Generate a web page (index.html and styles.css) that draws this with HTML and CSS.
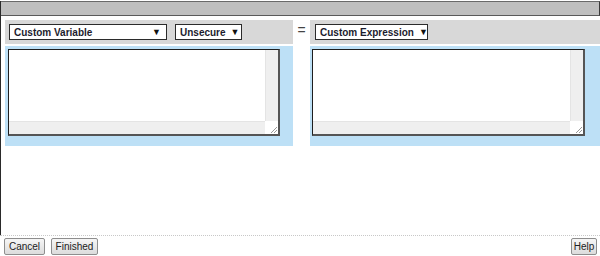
FILE: index.html
```html
<!DOCTYPE html>
<html lang="en">
<head>
    <meta charset="UTF-8">
    <title>Condition Editor</title>
    <link rel="stylesheet" href="styles.css">
</head>
<body>
    <div class="window">
        <div class="titlebar"></div>
        <div class="content">
            <div class="side left">
                <div class="toolbar">
                    <span class="select variable">Custom Variable <span class="arrow">&#9660;</span></span>
                    <span class="select security">Unsecure <span class="arrow">&#9660;</span></span>
                </div>
                <div class="area">
                    <div class="editor">
                        <div class="text"></div>
                        <div class="vscroll"></div>
                        <div class="hscroll"></div>
                        <div class="corner">
                            <svg width="10" height="10" viewBox="0 0 10 10">
                                <path d="M9 3 L3 9 M9 6 L6 9" stroke="#999" stroke-width="1" fill="none"/>
                            </svg>
                        </div>
                    </div>
                </div>
            </div>
            <div class="equals">=</div>
            <div class="side right">
                <div class="toolbar">
                    <span class="select expression">Custom Expression <span class="arrow">&#9660;</span></span>
                </div>
                <div class="area">
                    <div class="editor">
                        <div class="text"></div>
                        <div class="vscroll"></div>
                        <div class="hscroll"></div>
                        <div class="corner">
                            <svg width="10" height="10" viewBox="0 0 10 10">
                                <path d="M9 3 L3 9 M9 6 L6 9" stroke="#999" stroke-width="1" fill="none"/>
                            </svg>
                        </div>
                    </div>
                </div>
            </div>
        </div>
    </div>
    <div class="footer">
        <button class="btn cancel">Cancel</button>
        <button class="btn finished">Finished</button>
        <span class="spacer"></span>
        <button class="btn help">Help</button>
    </div>
</body>
</html>
```

FILE: styles.css
```css
body {
    margin: 0;
    width: 600px;
    height: 256px;
    overflow: hidden;
    background: #fff;
    font-family: "Liberation Sans", Arial, sans-serif;
}
.window {
    height: 234px;
    border-left: 1px solid #2a2a2a;
    box-sizing: border-box;
}
.titlebar {
    height: 15px;
    margin-top: 1px;
    box-sizing: border-box;
    background: #bfbfbf;
    border-top: 1px solid #6a6a6a;
    border-bottom: 1px solid #5a5a5a;
    border-right: 1px solid #3a3a3a;
}
.content {
    display: flex;
    padding: 4px 0 0 4px;
}
.side.left {
    width: 288px;
}
.side.right {
    flex: 1;
}
.toolbar {
    height: 24px;
    background: #d8d8d8;
    display: flex;
    align-items: center;
    gap: 8px;
    padding-left: 4px;
    margin-bottom: 2px;
}
.right .toolbar {
    padding-left: 5px;
}
.select {
    display: inline-flex;
    align-items: center;
    justify-content: space-between;
    height: 16px;
    box-sizing: border-box;
    border: 1px solid #2b2b2b;
    background: #fff;
    padding: 0 5px 0 4px;
    font-size: 10px;
    font-weight: bold;
    color: #1c1c2e;
    white-space: nowrap;
}
.select.variable {
    width: 158px;
}
.select.security {
    width: 67px;
}
.select.expression {
    width: 113px;
    padding-right: 7px;
}
.arrow {
    font-size: 9px;
    color: #111;
    margin-left: 5px;
}
.equals {
    width: 17px;
    text-align: center;
    font-size: 14px;
    color: #444;
    line-height: 16px;
    padding-top: 2px;
}
.area {
    height: 100px;
    background: #bde0f6;
    padding: 3px 0 0 3px;
    box-sizing: border-box;
}
.right .area {
    padding-left: 2px;
}
.editor {
    width: 272px;
    height: 87px;
    box-sizing: border-box;
    border: 1px solid #1e1e1e;
    border-right: 2px solid #555;
    border-bottom: 2px solid #555;
    display: grid;
    grid-template-columns: 1fr 13px;
    grid-template-rows: 1fr 13px;
    background: #fff;
}
.right .editor {
    width: 273px;
}
.vscroll {
    background: #efefef;
    border-left: 1px solid #e4e4e4;
}
.hscroll {
    background: #efefef;
    border-top: 1px solid #e4e4e4;
}
.corner {
    background: #fff;
    display: flex;
    align-items: flex-end;
    justify-content: flex-end;
}
.corner svg {
    display: block;
}
.footer {
    border-top: 1px dotted #c8c8c8;
    display: flex;
    gap: 6px;
    padding: 2px 3px 0 4px;
}
.spacer {
    flex: 1;
}
.btn {
    height: 17px;
    padding: 0;
    font-family: "Liberation Sans", Arial, sans-serif;
    font-size: 10px;
    color: #222;
    background: linear-gradient(#f6f6f6, #dcdcdc);
    border: 1px solid #8e8e8e;
    border-radius: 2px;
    line-height: 14px;
}
.btn.cancel {
    width: 41px;
}
.btn.finished {
    width: 47px;
}
.btn.help {
    width: 26px;
}
```
